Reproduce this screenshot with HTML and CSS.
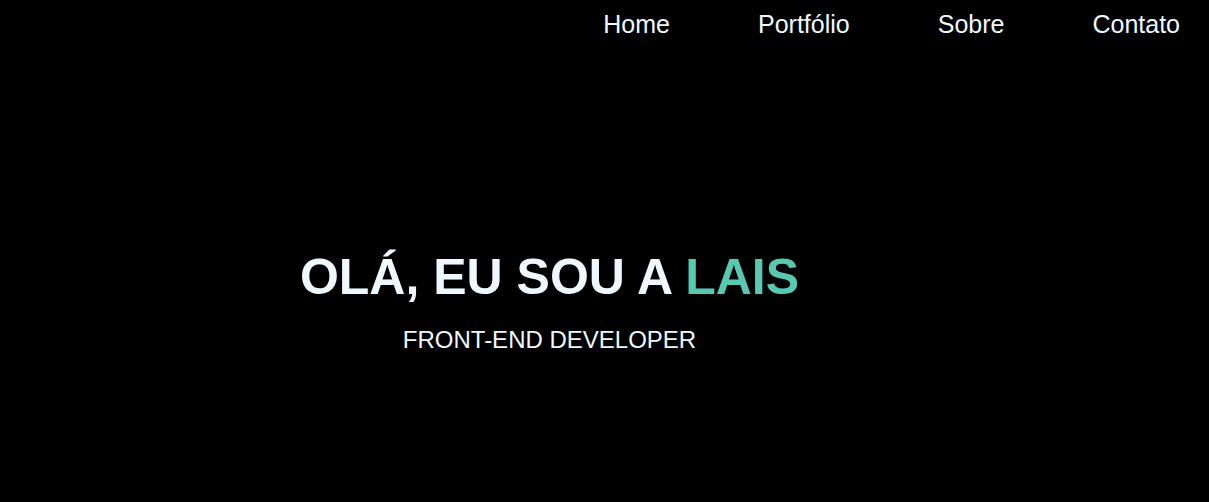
FILE: index.html
```html
<!DOCTYPE html>
<html lang="pt-BR">
<head>
<meta charset="utf-8">
<title>Lais - Front-end Developer</title>
<link rel="stylesheet" href="styles.css">
</head>
<body>
<header class="header">
  <nav class="nav">
    <a class="nav-link" href="#">Home</a>
    <a class="nav-link" href="#">Portfólio</a>
    <a class="nav-link" href="#">Sobre</a>
    <a class="nav-link" href="#">Contato</a>
  </nav>
</header>
<main class="hero">
  <h1 class="hero-title">OLÁ, EU SOU A <span class="accent">LAIS</span></h1>
  <p class="hero-subtitle">FRONT-END DEVELOPER</p>
</main>
</body>
</html>
```

FILE: styles.css
```css
* {
  box-sizing: border-box;
}

html, body {
  margin: 0;
  padding: 0;
  background: #000;
  height: 100%;
}

body {
  font-family: "Liberation Sans", Arial, sans-serif;
  color: #f0f8ff;
}

.header {
  padding: 10px 29px 0 0;
}

.nav {
  display: flex;
  justify-content: flex-end;
  gap: 88px;
}

.nav-link {
  font-size: 25px;
  color: #f0f8ff;
  text-decoration: none;
}

.hero {
  display: flex;
  flex-direction: column;
  align-items: center;
  padding: 209px 110px 0 0;
}

.hero-title {
  margin: 0;
  font-size: 50px;
  font-weight: 700;
  line-height: normal;
}

.accent {
  color: #57c9b1;
}

.hero-subtitle {
  margin: 20px 0 0;
  font-size: 24px;
}
```
